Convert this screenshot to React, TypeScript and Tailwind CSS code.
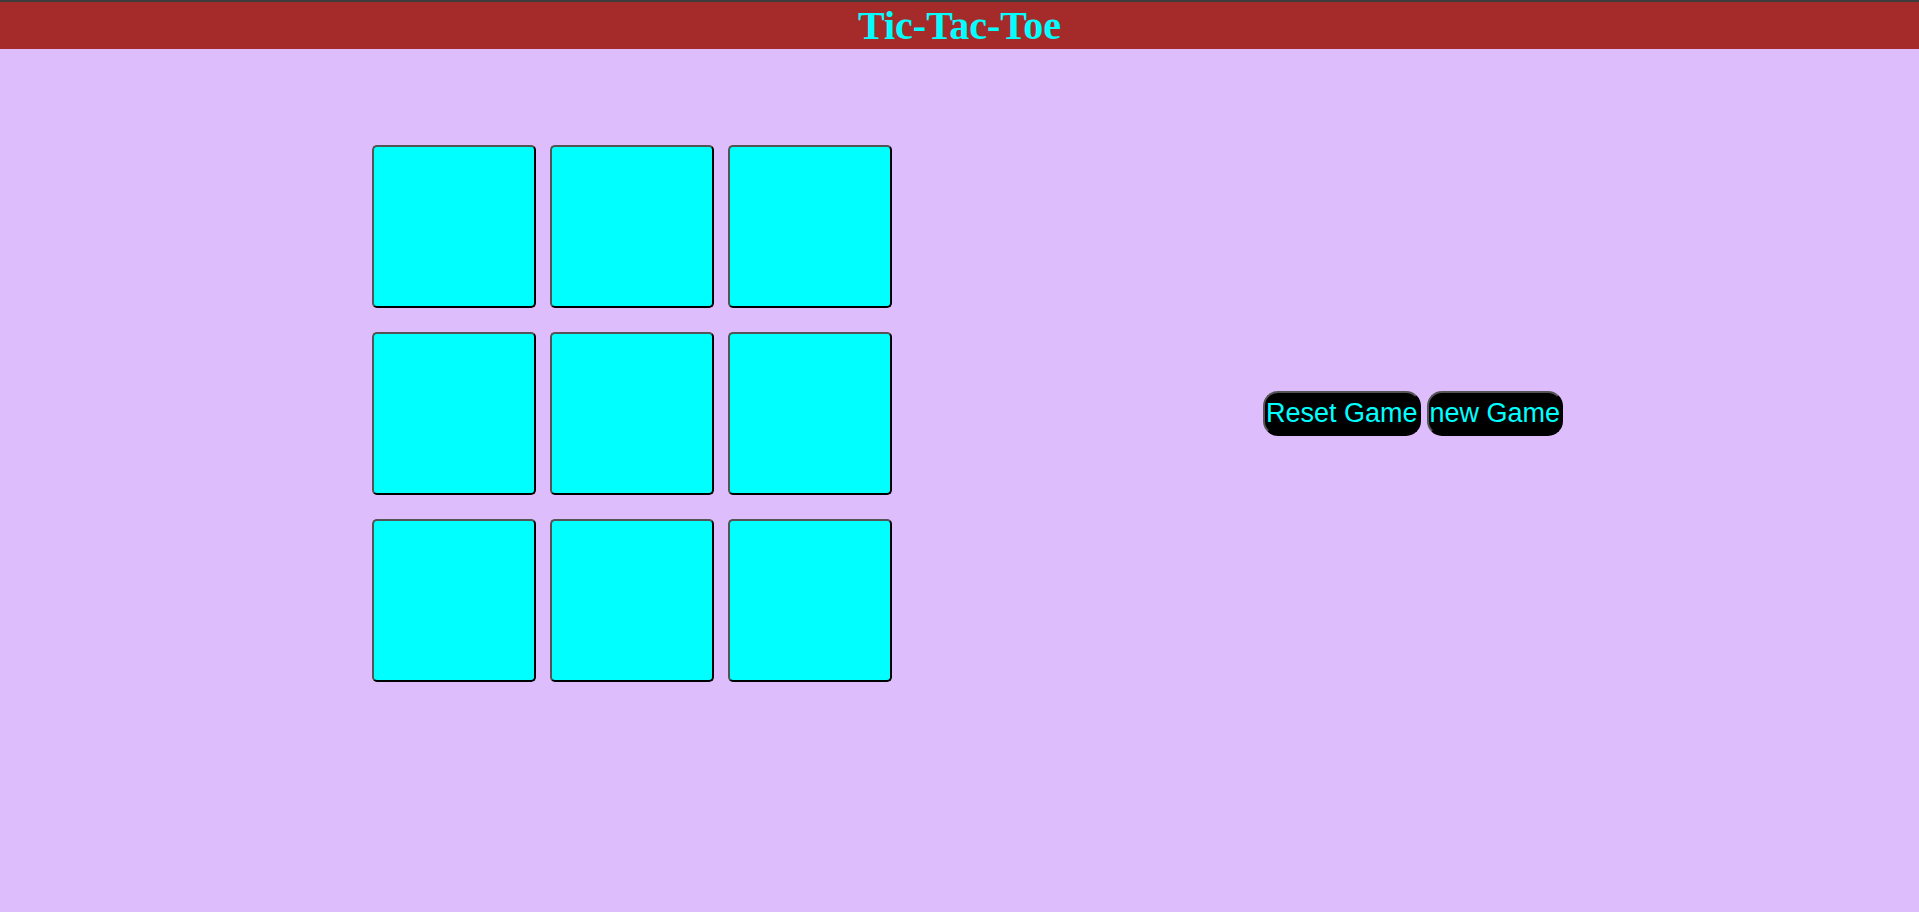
const cells = Array.from({ length: 9 }, (_, i) => i);

const Cell = () => {
  return (
    <button className="w-[164px] h-[163px] bg-[#00ffff] rounded-[5px] border-2 border-black [border-style:outset] cursor-pointer" />
  );
};

const App = () => {
  return (
    <div className="min-h-[912px] bg-[#ddbdfc]">
      <header className="h-[49px] bg-[#a52a2a] border-t-2 border-[#3c3c3c] text-center">
        <h1 className="text-[40px] leading-[47px] font-bold text-[#00ffff] font-['Liberation_Serif',serif]">
          Tic-Tac-Toe
        </h1>
      </header>

      <main className="flex items-center pl-[372px] gap-[371px] pt-[96px]">
        <div className="grid grid-cols-3 gap-x-[14px] gap-y-[24px]">
          {cells.map((c) => (
            <Cell key={c} />
          ))}
        </div>

        <div className="flex gap-[6px]">
          <button className="h-[45px] px-[1px] bg-black text-[#00ffff] text-[27px] rounded-[15px] border-2 border-black [border-style:outset] font-['Liberation_Sans',Arial,sans-serif] cursor-pointer">
            Reset Game
          </button>
          <button className="h-[45px] px-[1px] bg-black text-[#00ffff] text-[27px] rounded-[15px] border-2 border-black [border-style:outset] font-['Liberation_Sans',Arial,sans-serif] cursor-pointer">
            new Game
          </button>
        </div>
      </main>
    </div>
  );
};

export default App;
